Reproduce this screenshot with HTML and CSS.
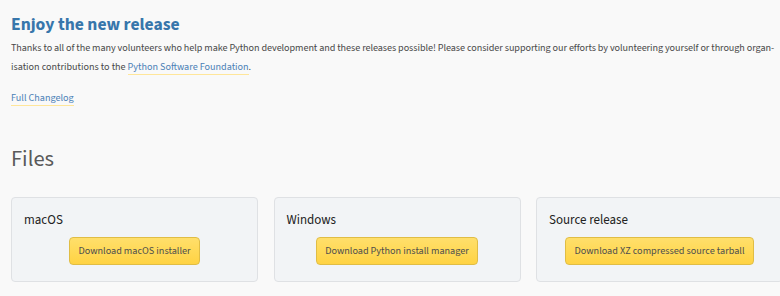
FILE: index.html
```html
<!DOCTYPE html>
<html lang="en">
<head>
    <meta charset="UTF-8">
    <meta name="viewport" content="width=device-width, initial-scale=1.0">
    <title>Python Release</title>
    <link rel="stylesheet" href="styles.css">
</head>
<body>
    <div class="page">
        <h2 class="title">Enjoy the new release</h2>
        <p class="thanks">
            <span class="line tight">Thanks to all of the many volunteers who help make Python development and these releases possible! Please consider supporting our efforts by volunteering yourself or through organ-</span>
            <span class="line">isation contributions to the <a href="#">Python Software Foundation</a>.</span>
        </p>
        <p class="changelog"><a href="#">Full Changelog</a></p>

        <h1 class="files-title">Files</h1>
        <div class="files">
            <div class="card">
                <h3>macOS</h3>
                <a class="button" href="#">Download macOS installer</a>
            </div>
            <div class="card">
                <h3>Windows</h3>
                <a class="button" href="#">Download Python install manager</a>
            </div>
            <div class="card">
                <h3>Source release</h3>
                <a class="button" href="#">Download XZ compressed source tarball</a>
            </div>
        </div>
    </div>
</body>
</html>
```

FILE: styles.css
```css
body {
    margin: 0;
    background: #f9f9f9;
    font-family: "Source Sans 3", "Source Sans Pro", Lato, sans-serif;
    color: #444;
    overflow: hidden;
}
.page {
    padding: 14px 0 0 11px;
}
.title {
    margin: 0;
    font-size: 17.6px;
    line-height: 22px;
    font-weight: bold;
    color: #3776ab;
}
.thanks {
    margin: 3px 0 0;
    font-size: 10.15px;
    line-height: 19px;
    color: #484848;
}
.line {
    display: block;
    white-space: nowrap;
}
.tight {
    letter-spacing: -0.06px;
}
a {
    color: #4a80b6;
    text-decoration: none;
    border-bottom: 1px solid #ffe69a;
}
.changelog {
    margin: 12px 0 0;
    font-size: 10.15px;
    line-height: 19px;
}
.files-title {
    margin: 34px 0 0;
    font-size: 22.5px;
    line-height: 34px;
    font-weight: normal;
    color: #5a5a5a;
}
.files {
    display: flex;
    gap: 15.5px;
    margin-top: 21px;
}
.card {
    flex: 0 0 247px;
    box-sizing: border-box;
    height: 85px;
    background: #f2f4f6;
    border: 1px solid #dfe1e4;
    border-radius: 4px;
    padding: 12px 12px 0;
    display: flex;
    flex-direction: column;
    align-items: center;
}
.card h3 {
    align-self: flex-start;
    margin: 0;
    font-size: 13px;
    line-height: 20px;
    font-weight: normal;
    color: #222;
}
.button {
    margin-top: 7px;
    box-sizing: border-box;
    height: 28px;
    line-height: 26px;
    padding: 0 8px;
    font-size: 10.2px;
    color: #4d4d4d;
    background: linear-gradient(#ffdf6b, #ffd343);
    border: 1px solid #e0bd45;
    border-radius: 4px;
    white-space: nowrap;
}
```
